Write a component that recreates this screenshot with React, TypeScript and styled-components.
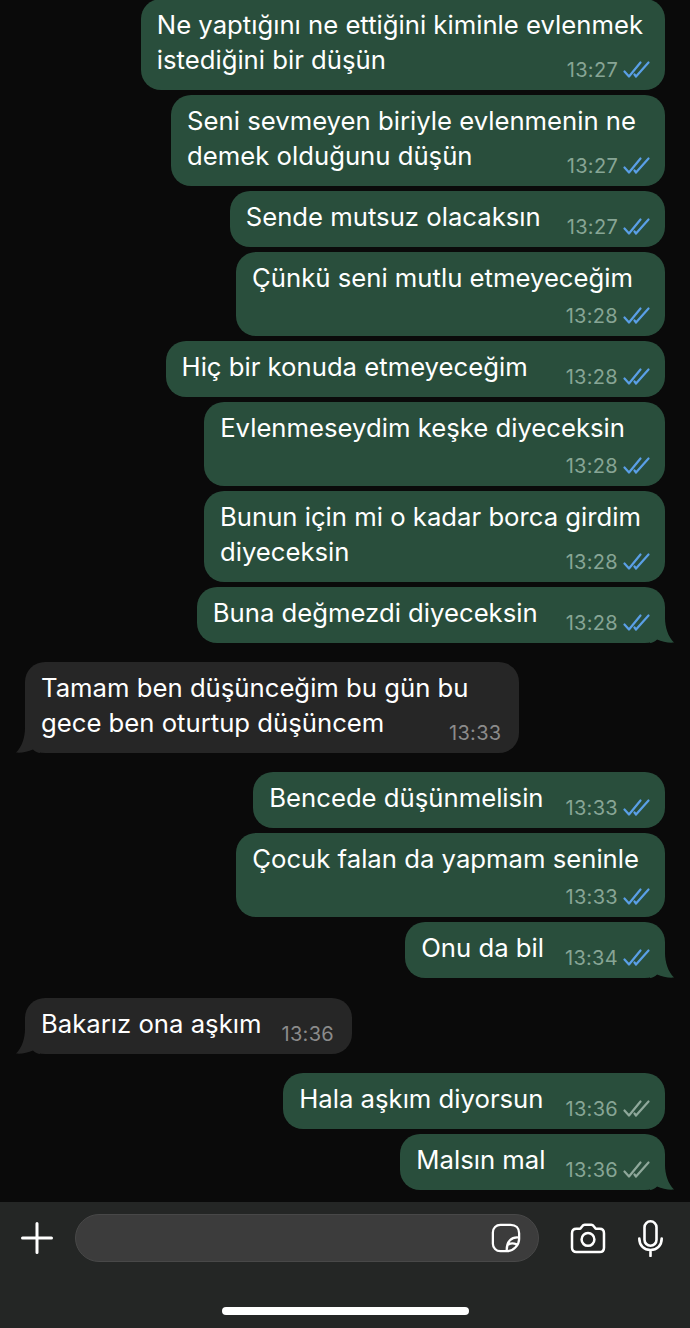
import React from "react";
import styled, { createGlobalStyle } from "styled-components";

const Global = createGlobalStyle`
  html, body { margin: 0; padding: 0; background: #0a0a0a; }
  #root { width: 690px; height: 1328px; }
`;
const Page = styled.div`
  width: 690px; height: 1328px; display: flex; flex-direction: column; overflow: hidden;
  background: #0a0a0a; font-family: Inter, "Liberation Sans", sans-serif; color: #fff;
`;
const Thread = styled.div`
  flex: 1; min-height: 0; display: flex; flex-direction: column; justify-content: flex-end;
  padding: 0 25px 12px 25px;
`;
const Row = styled.div<{ $out: boolean; $gap: number }>`
  display: flex; justify-content: ${(p) => (p.$out ? "flex-end" : "flex-start")};
  margin-top: ${(p) => p.$gap}px; flex-shrink: 0;
`;
const Bubble = styled.div<{ $out: boolean; $stack: boolean; $two: boolean }>`
  position: relative; display: flex; box-sizing: border-box;
  flex-direction: ${(p) => (p.$stack ? "column" : "row")};
  align-items: ${(p) => (p.$stack ? "stretch" : "flex-start")};
  background: ${(p) => (p.$out ? "#294e3c" : "#262626")};
  border-radius: 20px;
  padding: 8px 15px 9px 16px;
`;
const Body = styled.div<{ $trail: number }>`
  font-size: 25.7px; line-height: 35px; white-space: nowrap;
  margin-right: ${(p) => p.$trail}px;
`;
const Meta = styled.div<{ $out: boolean; $stack: boolean; $two: boolean }>`
  display: flex; align-items: center; justify-content: flex-end; gap: 5px;
  font-size: 20px; line-height: 22px; letter-spacing: 0.3px;
  color: ${(p) => (p.$out ? "#87a595" : "#8b8b8b")};
  margin-right: ${(p) => (p.$out ? "0" : "3px")};
  margin-top: ${(p) => (p.$two ? "-18px" : p.$stack ? "10px" : "17px")};
`;
const Tail = styled.svg<{ $out: boolean }>`
  position: absolute; bottom: 0; width: 24px; height: 25px; overflow: visible;
  ${(p) => (p.$out ? "right: -9px;" : "left: -9px;")}
`;
const Composer = styled.div`
  height: 126px; flex-shrink: 0; box-sizing: border-box; background: #242625;
  padding-top: 12px; display: flex; flex-direction: column;
`;
const Tools = styled.div`
  display: flex; align-items: center; height: 48px; padding: 0 27px 0 21px;
`;
const Field = styled.div`
  flex: 1; height: 48px; box-sizing: border-box; margin-left: 22px; margin-right: 31px;
  background: #3c3c3c; border: 1px solid #484848; border-radius: 24px;
  display: flex; align-items: center; justify-content: flex-end; padding-right: 17px;
`;
const Icons = styled.div`
  display: flex; align-items: center; gap: 32px;
`;
const HomeBar = styled.div`
  width: 247px; height: 8px; border-radius: 4px; background: #fff; align-self: center; margin-top: 45px;
`;

const Ticks = ({ read }: { read: boolean }) => (
  <svg width="27" height="18" viewBox="0 0 27 18" fill="none" stroke={read ? "#5a9fe6" : "#8fa89b"} strokeWidth="2.2" strokeLinecap="round" strokeLinejoin="round">
    <path d="M1.5 10.5 L6 15.5 L17.5 1.5" />
    <path d="M11.5 13.5 L13 15.5 L25.5 1.5" />
  </svg>
);

type Msg = { lines: string[]; time: string; trail: number; out?: boolean; read?: boolean; tail?: boolean; stack?: boolean; gap?: number };
const messages: Msg[] = [
  { lines: ["Ne yaptığını ne ettiğini kiminle evlenmek", "istediğini bir düşün"], time: "13:27", out: true, read: true, gap: 0, trail: 7 },
  { lines: ["Seni sevmeyen biriyle evlenmenin ne", "demek olduğunu düşün"], time: "13:27", out: true, read: true, trail: 14 },
  { lines: ["Sende mutsuz olacaksın"], time: "13:27", out: true, read: true, trail: 26 },
  { lines: ["Çünkü seni mutlu etmeyeceğim"], time: "13:28", out: true, read: true, stack: true, trail: 17 },
  { lines: ["Hiç bir konuda etmeyeceğim"], time: "13:28", out: true, read: true, trail: 38 },
  { lines: ["Evlenmeseydim keşke diyeceksin"], time: "13:28", out: true, read: true, stack: true, trail: 25 },
  { lines: ["Bunun için mi o kadar borca girdim", "diyeceksin"], time: "13:28", out: true, read: true, trail: 9 },
  { lines: ["Buna değmezdi diyeceksin"], time: "13:28", out: true, read: true, tail: true, trail: 28 },
  { lines: ["Tamam ben düşünceğim bu gün bu", "gece ben oturtup düşüncem"], time: "13:33", gap: 19, trail: 36 },
  { lines: ["Bencede düşünmelisin"], time: "13:33", out: true, read: true, gap: 19, trail: 22 },
  { lines: ["Çocuk falan da yapmam seninle"], time: "13:33", out: true, read: true, stack: true, trail: 11 },
  { lines: ["Onu da bil"], time: "13:34", out: true, read: true, tail: true, trail: 21 },
  { lines: ["Bakarız ona aşkım"], time: "13:36", gap: 20, trail: 20 },
  { lines: ["Hala aşkım diyorsun"], time: "13:36", out: true, read: false, gap: 19, trail: 22 },
  { lines: ["Malsın mal"], time: "13:36", out: true, read: false, tail: true, trail: 20 },
];

const Message = ({ m }: { m: Msg }) => {
  const out = !!m.out;
  const two = m.lines.length > 1;
  const stack = two || !!m.stack;
  const tail = m.tail || !out;
  return (
    <Row $out={out} $gap={m.gap ?? 5}>
      <Bubble $out={out} $stack={stack} $two={two}>
        <Body $trail={m.trail}>
          {m.lines.map((l, i) => (
            <div key={i}>{l}</div>
          ))}
        </Body>
        <Meta $out={out} $stack={stack} $two={two}>
          <span>{m.time}</span>
          {out && <Ticks read={!!m.read} />}
        </Meta>
        {tail && (
          <Tail $out={out} viewBox="0 0 24 25">
            {out ? (
              <path fill="#294e3c" d="M0 0 H15 C15 9 18 19 24 24.5 C19 25 12 24 7 21.5 C5 23.5 2 25 0 25 Z" />
            ) : (
              <path fill="#262626" d="M24 0 H9 C9 9 6 19 0 24.5 C5 25 12 24 17 21.5 C19 23.5 22 25 24 25 Z" />
            )}
          </Tail>
        )}
      </Bubble>
    </Row>
  );
};

export default function App() {
  return (
    <Page>
      <Global />
      <Thread>
        {messages.map((m, i) => (
          <Message key={i} m={m} />
        ))}
      </Thread>
      <Composer>
        <Tools>
          <svg width="32" height="32" viewBox="0 0 32 32" fill="none" stroke="#fff" strokeWidth="3" strokeLinecap="round">
            <path d="M16 1.5 V30.5 M1.5 16 H30.5" />
          </svg>
          <Field>
            <svg width="30" height="30" viewBox="0 0 32 32" fill="none" stroke="#fff" strokeWidth="2.4" strokeLinejoin="round" strokeLinecap="round">
              <path d="M10 2 H21 C26.5 2 30 5.5 30 11 V17 C30 23.5 24 30 17.5 30 H10 C5.5 30 2 26.5 2 22 V10 C2 5.5 5.5 2 10 2 Z" />
              <path d="M29.8 15.5 C22 14.5 16.3 19.5 16.8 29.8 M18.5 23 C21 21.5 24 21.5 26.8 22.5" />
            </svg>
          </Field>
          <Icons>
            <svg width="36" height="31" viewBox="0 0 36 32" fill="none" stroke="#fff" strokeWidth="2.6" strokeLinejoin="round">
              <path d="M6 6 H10 L12.5 2.8 C13 2 13.5 1.8 14.5 1.8 H21.5 C22.5 1.8 23 2 23.5 2.8 L26 6 H30 C32.8 6 34.5 7.8 34.5 10.5 V25.5 C34.5 28.2 32.8 30 30 30 H6 C3.2 30 1.5 28.2 1.5 25.5 V10.5 C1.5 7.8 3.2 6 6 6 Z" />
              <circle cx="18" cy="17" r="6.6" />
            </svg>
            <svg width="25" height="37" viewBox="0 0 25 37" fill="none" stroke="#fff" strokeWidth="2.6" strokeLinecap="round">
              <rect x="6.5" y="1.3" width="12" height="24.5" rx="6" />
              <path d="M1.3 18.5 C1.3 25.5 6 30 12.5 30 C19 30 23.7 25.5 23.7 18.5 M12.5 30 V36" />
            </svg>
          </Icons>
        </Tools>
        <HomeBar />
      </Composer>
    </Page>
  );
}
